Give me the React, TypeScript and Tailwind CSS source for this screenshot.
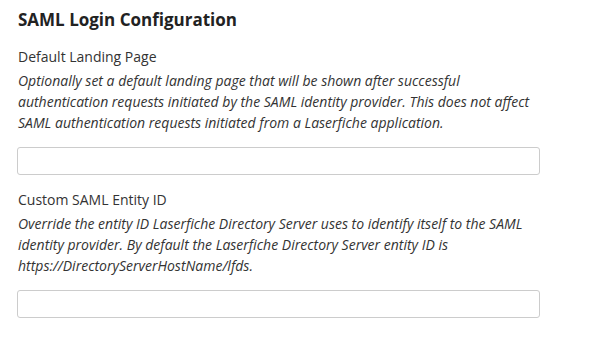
export default function App() {
  return (
    <div className="min-h-screen bg-white px-[18px] pt-[8px] text-[#333] font-['Open_Sans',sans-serif]">
      <h2 className="text-[17px] leading-[24px] font-bold text-[#222]">SAML Login Configuration</h2>

      <div className="mt-[15px]">
        <label className="block text-[14px] leading-[20px]">Default Landing Page</label>
        <p className="mt-[3px] w-[522px] text-[14px] leading-[21px] italic">
          Optionally set a default landing page that will be shown after successful authentication requests initiated
          by the SAML identity provider. This does not affect SAML authentication requests initiated from a Laserfiche
          application.
        </p>
        <input
          type="text"
          className="mt-[14px] -ml-px block h-[28px] w-[523px] rounded-[3px] border border-[#ccc] bg-white px-2 text-[14px] outline-none"
        />
      </div>

      <div className="mt-[15px]">
        <label className="block text-[14px] leading-[20px]">Custom SAML Entity ID</label>
        <p className="mt-[3px] w-[522px] text-[14px] leading-[21px] italic">
          Override the entity ID Laserfiche Directory Server uses to identify itself to the SAML identity provider. By
          default the Laserfiche Directory Server entity ID is https://DirectoryServerHostName/lfds.
        </p>
        <input
          type="text"
          className="mt-[14px] -ml-px block h-[28px] w-[523px] rounded-[3px] border border-[#ccc] bg-white px-2 text-[14px] outline-none"
        />
      </div>
    </div>
  );
}
